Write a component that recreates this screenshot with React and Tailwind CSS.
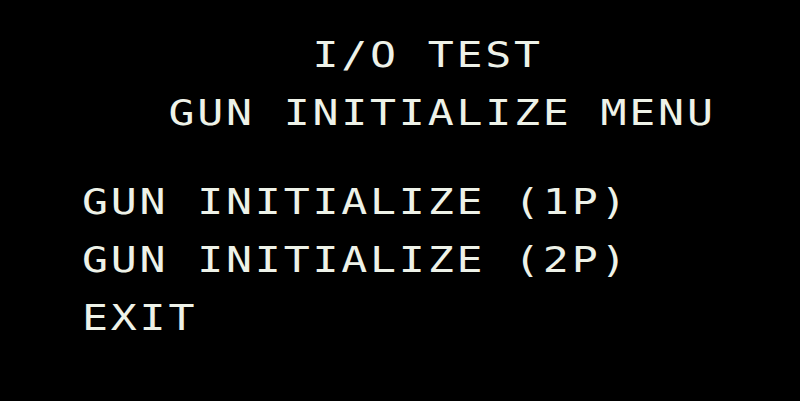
export default function App() {
  const lines = [
    { text: "        I/O TEST", cls: "pt-[26px]" },
    { text: "   GUN INITIALIZE MENU", cls: "" },
    { text: "GUN INITIALIZE (1P)", cls: "mt-[31px]" },
    { text: "GUN INITIALIZE (2P)", cls: "" },
    { text: "EXIT", cls: "" },
  ];
  return (
    <div className="w-full h-[401px] bg-black overflow-hidden font-['DejaVu_Sans_Mono',monospace] text-[36px] text-[#eef2e8]">
      <div className="pt-[26px]">
        {lines.map((l, i) => (
          <div
            key={i}
            className={`h-[58px] leading-[58px] pl-[82px] whitespace-pre ${i === 2 ? "mt-[31px]" : ""}`}
          >
            <span className="inline-block origin-left scale-x-[1.2] tracking-[2.33px]">
              {l.text}
            </span>
          </div>
        ))}
      </div>
    </div>
  );
}
